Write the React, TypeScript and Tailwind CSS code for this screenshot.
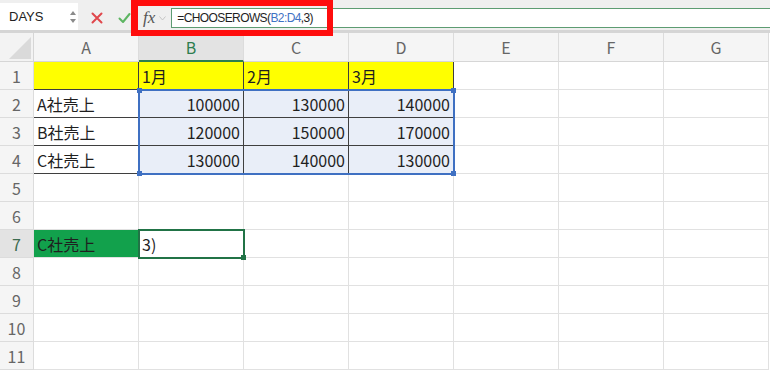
import React from 'react';

const colLetters = ['A', 'B', 'C', 'D', 'E', 'F', 'G'];
const colStart = ['col-start-1', 'col-start-2', 'col-start-3', 'col-start-4', 'col-start-5', 'col-start-6', 'col-start-7', 'col-start-8'];
const rowStart = ['row-start-1', 'row-start-2', 'row-start-3', 'row-start-4', 'row-start-5', 'row-start-6', 'row-start-7', 'row-start-8', 'row-start-9', 'row-start-10', 'row-start-11', 'row-start-12'];

// values by "row-col"
const values: Record<string, string> = {
  '1-1': '1月',
  '1-2': '2月',
  '1-3': '3月',
  '2-0': 'A社売上',
  '2-1': '100000',
  '2-2': '130000',
  '2-3': '140000',
  '3-0': 'B社売上',
  '3-1': '120000',
  '3-2': '150000',
  '3-3': '170000',
  '4-0': 'C社売上',
  '4-1': '130000',
  '4-2': '140000',
  '4-3': '130000',
  '7-0': 'C社売上',
  '7-1': '3)',
};

const Handle: React.FC<{ pos: string; color: string }> = ({ pos, color }) => (
  <span className={`absolute h-[5px] w-[5px] ${pos} ${color}`} />
);

const Toolbar: React.FC = () => (
  <div className="relative flex h-[33px] items-start border-b-[3px] border-[#d5d5d5] bg-[#efefef]">
    {/* name box */}
    <div className="relative mt-[3px] flex h-[27px] w-[78px] items-center bg-white pl-[9px] text-[13px] text-[#222]" style={{ fontFamily: '"Liberation Sans", Arial, sans-serif' }}>
      DAYS
      <svg className="absolute right-[1px] top-[7px]" width="8" height="14" viewBox="0 0 8 14">
        <path d="M4 1 L7 5 L1 5 Z" fill="#8a8a8a" />
        <path d="M4 13 L7 9 L1 9 Z" fill="#8a8a8a" />
      </svg>
    </div>
    {/* cancel / enter */}
    <div className="ml-[13px] mt-[12px] flex items-center gap-[15px]">
      <svg width="12" height="12" viewBox="0 0 12 12">
        <path d="M1.5 1.5 L10.5 10.5 M10.5 1.5 L1.5 10.5" stroke="#e0474c" strokeWidth="2" strokeLinecap="round" />
      </svg>
      <svg width="13" height="12" viewBox="0 0 13 12">
        <path d="M1.5 6.5 L5 10 L11.5 2" stroke="#5db562" strokeWidth="2" fill="none" strokeLinecap="round" strokeLinejoin="round" />
      </svg>
    </div>
    {/* fx */}
    <div className="ml-[12px] mt-[5px] flex items-center">
      <span className="text-[17px] italic text-[#555]" style={{ fontFamily: '"Liberation Serif", "Times New Roman", serif' }}>
        fx
      </span>
      <svg className="ml-[4px] mt-[2px]" width="7" height="5" viewBox="0 0 7 5">
        <path d="M0.5 0.5 L3.5 4 L6.5 0.5" stroke="#c4c4c4" strokeWidth="1" fill="none" />
      </svg>
    </div>
    {/* formula input */}
    <div
      className="ml-[5px] mt-[8px] flex h-[20px] flex-1 items-center border border-r-0 border-[#5d9c72] bg-white pl-[5px] text-[12px] tracking-[-0.6px] text-[#1e1e1e]"
      style={{ fontFamily: '"Liberation Sans", Arial, sans-serif' }}
    >
      =CHOOSEROWS(<span className="text-[#3e72c4]">B2:D4</span>,3)
    </div>
    {/* red annotation */}
    <div className="pointer-events-none absolute left-[131px] top-0 z-20 h-[36px] w-[202px] border-[6px] border-l-[7px] border-[#ff0d0d]" />
  </div>
);

const Sheet: React.FC = () => {
  const cells: React.ReactNode[] = [];

  // corner
  cells.push(
    <div key="corner" className="relative col-start-1 row-start-1 border-b border-r border-[#d6d6d6] bg-[#f3f3f3]">
      <svg className="absolute bottom-[2px] right-[2px]" width="22" height="22" viewBox="0 0 22 22">
        <path d="M22 0 L22 22 L0 22 Z" fill="#dadada" />
      </svg>
    </div>
  );

  // column headers
  colLetters.forEach((c, i) => {
    const active = c === 'B';
    cells.push(
      <div
        key={`h-${c}`}
        className={`${colStart[i + 1]} row-start-1 flex items-center justify-center border-r border-[#dcdcdc] text-[16px] ${
          active ? 'border-b-2 border-b-[#2e7d4f] bg-[#e3e3e3] text-[#2e7d4f]' : 'border-b border-b-[#d6d6d6] bg-[#f5f5f5] text-[#666]'
        }`}
      >
        {c}
      </div>
    );
  });

  for (let r = 1; r <= 11; r++) {
    const activeRow = r === 7;
    cells.push(
      <div
        key={`r-${r}`}
        className={`col-start-1 ${rowStart[r]} flex items-center justify-center border-b border-r border-[#dcdcdc] text-[16px] ${
          activeRow ? 'bg-[#e3e3e3] text-[#3c6b4f]' : 'bg-[#f5f5f5] text-[#666]'
        }`}
      >
        {r}
      </div>
    );

    for (let c = 0; c < 7; c++) {
      const v = values[`${r}-${c}`];
      const inTable = r <= 4 && c <= 3;
      const yellow = r === 1 && c <= 3;
      const blue = r >= 2 && r <= 4 && c >= 1 && c <= 3;
      const green = r === 7 && c === 0;
      const numeric = v !== undefined && /^\d+$/.test(v);
      cells.push(
        <div
          key={`c-${r}-${c}`}
          className={`${colStart[c + 1]} ${rowStart[r]} flex items-center overflow-hidden whitespace-nowrap border-b border-r px-[3px] text-[16px] text-[#1f1f1f] ${
            inTable ? 'border-[#3f3f3f]' : 'border-[#e1e1e1]'
          } ${yellow ? 'bg-[#ffff00]' : blue ? 'bg-[#e9eef8]' : green ? 'bg-[#12a14c]' : 'bg-white'} ${numeric ? 'justify-end' : 'justify-start'}`}
        >
          {v}
        </div>
      );
    }
  }

  return (
    <div
      className="grid grid-cols-[34px_repeat(7,105px)] grid-rows-[29px_repeat(11,28px)]"
      style={{ fontFamily: '"Noto Sans CJK JP", "Noto Sans", sans-serif' }}
    >
      {cells}
      {/* B2:D4 reference range */}
      <div className="pointer-events-none relative z-10 col-span-3 col-start-3 row-span-3 row-start-3 -m-px border-2 border-[#3f70c2]">
        <Handle pos="-left-[3px] -top-[3px]" color="bg-[#3f70c2]" />
        <Handle pos="-right-[3px] -top-[3px]" color="bg-[#3f70c2]" />
        <Handle pos="-left-[3px] -bottom-[3px]" color="bg-[#3f70c2]" />
        <Handle pos="-right-[3px] -bottom-[3px]" color="bg-[#3f70c2]" />
      </div>
      {/* active cell B7 */}
      <div className="pointer-events-none relative z-10 col-start-3 row-start-8 -m-px border-2 border-[#217346]">
        <Handle pos="-right-[3px] -bottom-[3px]" color="bg-[#217346]" />
      </div>
    </div>
  );
};

export default function App() {
  return (
    <div className="h-[371px] w-[770px] overflow-hidden bg-white">
      <Toolbar />
      <Sheet />
    </div>
  );
}
